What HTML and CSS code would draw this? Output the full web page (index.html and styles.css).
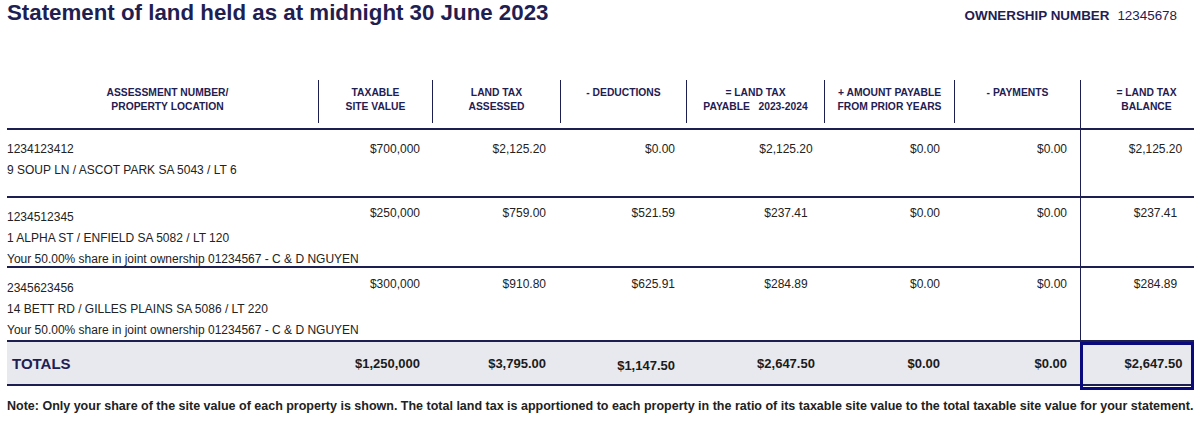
FILE: index.html
```html
<!DOCTYPE html>
<html>
<head>
<meta charset="utf-8">
<link rel="stylesheet" href="styles.css">
</head>
<body>
<div class="page">
  <div class="topbar">
    <h1 class="title">Statement of land held as at midnight 30 June 2023</h1>
    <div class="owner"><span class="owner-label">OWNERSHIP NUMBER</span><span class="owner-num">12345678</span></div>
  </div>

  <div class="table">
    <div class="grid thead">
      <div class="th c1">ASSESSMENT NUMBER/<br>PROPERTY LOCATION</div>
      <div class="th div">TAXABLE<br>SITE VALUE</div>
      <div class="th div">LAND TAX<br>ASSESSED</div>
      <div class="th div">- DEDUCTIONS</div>
      <div class="th div">= LAND TAX<br>PAYABLE&nbsp;&nbsp; 2023-2024</div>
      <div class="th div">+ AMOUNT PAYABLE<br>FROM PRIOR YEARS</div>
      <div class="th div">- PAYMENTS</div>
      <div class="th c8">= LAND TAX<br>BALANCE</div>
    </div>

    <div class="grid row r1">
      <div class="td c1"><div>1234123412</div><div>9 SOUP LN / ASCOT PARK SA 5043 / LT 6</div></div>
      <div class="td num n2">$700,000</div>
      <div class="td num n3">$2,125.20</div>
      <div class="td num n4">$0.00</div>
      <div class="td num n5">$2,125.20</div>
      <div class="td num n6">$0.00</div>
      <div class="td num n7">$0.00</div>
      <div class="td num n8 c8">$2,125.20</div>
    </div>

    <div class="grid row r2">
      <div class="td c1 shifted"><div>1234512345</div><div>1 ALPHA ST / ENFIELD SA 5082 / LT 120</div><div>Your 50.00% share in joint ownership 01234567 - C &amp; D NGUYEN</div></div>
      <div class="td num n2">$250,000</div>
      <div class="td num n3">$759.00</div>
      <div class="td num n4">$521.59</div>
      <div class="td num n5">$237.41</div>
      <div class="td num n6">$0.00</div>
      <div class="td num n7">$0.00</div>
      <div class="td num n8 c8">$237.41</div>
    </div>

    <div class="grid row r3">
      <div class="td c1 shifted"><div>2345623456</div><div>14 BETT RD / GILLES PLAINS SA 5086 / LT 220</div><div>Your 50.00% share in joint ownership 01234567 - C &amp; D NGUYEN</div></div>
      <div class="td num n2">$300,000</div>
      <div class="td num n3">$910.80</div>
      <div class="td num n4">$625.91</div>
      <div class="td num n5">$284.89</div>
      <div class="td num n6">$0.00</div>
      <div class="td num n7">$0.00</div>
      <div class="td num n8 c8">$284.89</div>
    </div>

    <div class="grid totals">
      <div class="tt label">TOTALS</div>
      <div class="tt num n2">$1,250,000</div>
      <div class="tt num n3">$3,795.00</div>
      <div class="tt num n4 low">$1,147.50</div>
      <div class="tt num n5">$2,647.50</div>
      <div class="tt num n6">$0.00</div>
      <div class="tt num n7">$0.00</div>
      <div class="tt num n8 boxed">$2,647.50</div>
    </div>
  </div>

  <p class="note">Note: Only your share of the site value of each property is shown. The total land tax is apportioned to each property in the ratio of its taxable site value to the total taxable site value for your statement.</p>
</div>
</body>
</html>
```

FILE: styles.css
```css
* { box-sizing: border-box; }
html, body { margin: 0; padding: 0; background: #ffffff; }
body {
  font-family: "Liberation Sans", Arial, sans-serif;
  color: #222222;
}
.page { width: 1201px; padding: 0 0 0 7px; }

.topbar {
  display: flex;
  justify-content: space-between;
  align-items: flex-start;
  height: 80px;
}
.title {
  margin: 0;
  font-size: 22.3px;
  line-height: 26px;
  font-weight: bold;
  color: #1f2052;
}
.owner {
  margin: 7px 24px 0 0;
  font-size: 13.4px;
  line-height: 17px;
  color: #1f2052;
}
.owner-label { font-weight: bold; margin-right: 8px; }

.table { width: 1187px; }
.grid {
  display: grid;
  grid-template-columns: 311px 114px 128px 126px 138px 130px 126px 114px;
}

.thead {
  height: 50px;
  border-bottom: 2px solid #1d1f50;
}
.th {
  font-size: 10.3px;
  line-height: 14px;
  font-weight: bold;
  color: #1f2052;
  text-align: center;
  padding-top: 6px;
  height: 43px;
  white-space: nowrap;
}
.th.div { border-left: 1.5px solid #1d1f50; }
.th.c1 { padding-left: 10px; }
.thead .c8 {
  height: 48px;
  border-left: 1.5px solid #1d1f50;
  padding-left: 18px;
}

.row { border-bottom: 2px solid #1d1f50; }
.r1 { height: 68px; }
.r2 { height: 70px; }
.r3 { height: 74px; }
.td {
  font-size: 12px;
  line-height: 21px;
  white-space: nowrap;
}
.td.c1 { padding-top: 9px; }
.td.c1.shifted { padding-top: 9px; }
.r3 .td.c1.shifted { padding-top: 10px; }
.r2 .num { padding-top: 5px; }
.r3 .num { padding-top: 6px; }
.r1 .num { padding-top: 9px; }
.row .c8 { border-left: 1.5px solid #1d1f50; }

.num { text-align: right; }
.n2 { padding-right: 12px; }
.n3 { padding-right: 14px; }
.n4 { padding-right: 11px; }
.n5 { text-align: center; padding-left: 62px; }
.n6 { padding-right: 14px; }
.n7 { padding-right: 13px; }
.n8 { text-align: center; padding-left: 36px; }

.totals {
  height: 44px;
  background: #e8e9ee;
  border-bottom: 2px solid #1d1f50;
  align-items: stretch;
}
.tt {
  font-size: 13px;
  font-weight: bold;
  line-height: 44px;
  color: #1b1b1b;
}
.tt.label {
  font-size: 15px;
  color: #1f2052;
  padding-left: 5px;
}
.tt.low { line-height: 48px; }
.tt.boxed {
  border: 3px solid #0a0a7c;
  line-height: 37px;
  padding-left: 33px;
}

.note {
  margin: 13px 0 0 0;
  font-size: 12.5px;
  line-height: 15px;
  font-weight: bold;
  color: #222222;
  white-space: nowrap;
}
```
